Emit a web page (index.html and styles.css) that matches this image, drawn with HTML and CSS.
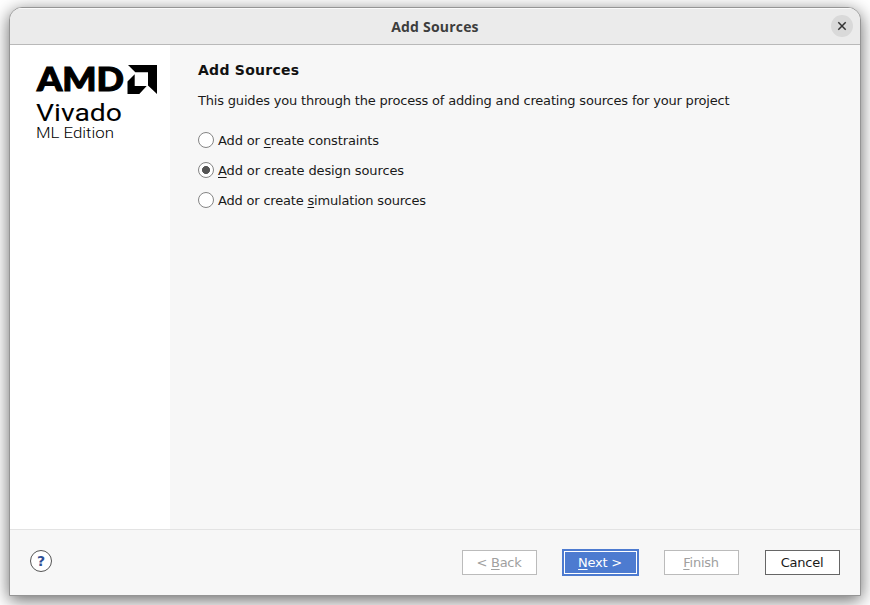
FILE: index.html
```html
<!DOCTYPE html>
<html lang="en">
<head>
<meta charset="utf-8">
<title>Add Sources</title>
<link rel="stylesheet" href="styles.css">
</head>
<body>
<div class="window">
  <header class="titlebar">
    <span class="title">Add Sources</span>
    <button class="close" aria-label="Close"><svg width="22" height="22" viewBox="0 0 22 22"><path d="M7.3 7.3l7.4 7.4M14.7 7.3l-7.4 7.4"/></svg></button>
  </header>
  <div class="body">
    <aside class="sidebar">
      <svg class="logo" width="124" height="80" viewBox="0 0 124 80">
        <text class="amd" x="1" y="31.3" textLength="87" lengthAdjust="spacingAndGlyphs">AMD</text>
        <path d="M92 5H121V34L112 25.5V12.3H99.3ZM98.7 14.3V26H110.7L103.3 34H91.5V21.5Z"/>
        <text class="product" x="0" y="61.2" textLength="86" lengthAdjust="spacingAndGlyphs">Vivado</text>
        <text class="edition" x="0" y="77.8" textLength="78" lengthAdjust="spacingAndGlyphs">ML Edition</text>
      </svg>
    </aside>
    <main class="content">
      <h1>Add Sources</h1>
      <p class="intro">This guides you through the process of adding and creating sources for your project</p>
      <div class="options">
        <label class="option"><i class="radio"></i><span class="o1">Add or <u>c</u>reate constraints</span></label>
        <label class="option"><i class="radio checked"></i><span class="o2"><u>A</u>dd or create design sources</span></label>
        <label class="option"><i class="radio"></i><span class="o3">Add or create <u>s</u>imulation sources</span></label>
      </div>
    </main>
  </div>
  <footer class="footer">
    <button class="help">?</button>
    <button class="btn disabled back"><span>&lt; <u>B</u>ack</span></button>
    <button class="btn primary"><span><u>N</u>ext &gt;</span></button>
    <button class="btn disabled finish"><span><u>F</u>inish</span></button>
    <button class="btn cancel"><span>Cancel</span></button>
  </footer>
</div>
</body>
</html>
```
FILE: styles.css
```css
* { box-sizing: border-box; }
body {
  margin: 0;
  height: 605px;
  overflow: hidden;
  background: #fff;
  padding: 7px 0 0 9px;
  font: 13px/16px "DejaVu Sans", sans-serif;
  color: #1a1a1a;
}
button { font: inherit; padding: 0; margin: 0; }
.window {
  width: 852px;
  height: 589px;
  border: 1px solid #959595;
  border-radius: 13px 13px 0 0;
  background: #f7f7f7;
  display: flex;
  flex-direction: column;
  overflow: hidden;
  box-shadow: 0 4px 17px rgba(0, 0, 0, .6);
}
.titlebar {
  height: 37px;
  flex: none;
  background: #ebebeb;
  border-top: 1px solid #fafafa;
  border-bottom: 1px solid #b9b9b9;
  display: grid;
  grid-template-columns: 1fr auto 1fr;
  align-items: center;
}
.title {
  grid-column: 2;
  font: bold 14px/20px "Open Sans", sans-serif;
  letter-spacing: .2px;
  color: #3d3d3d;
}
.close {
  justify-self: end;
  margin: -2px 7px 0 0;
  width: 22px;
  height: 22px;
  border: 0;
  border-radius: 50%;
  background: #d9d9d9;
}
.close svg { display: block; stroke: #333; stroke-width: 1.5; }
.body { height: 484px; flex: none; display: flex; }
.sidebar { width: 160px; background: #fff; padding: 15px 0 0 26px; }
.logo { display: block; fill: #000; overflow: visible; }
.amd { font-family: Lato, sans-serif; font-weight: 900; font-size: 33px; stroke: #000; stroke-width: 1.1px; }
.product { font-family: Roboto, sans-serif; font-weight: 400; font-size: 23.5px; }
.edition { font-family: Roboto, sans-serif; font-weight: 300; font-size: 14px; }
.content { flex: 1; padding: 17px 28px 0; }
h1 { margin: 0; font-size: 14px; line-height: 17px; letter-spacing: .27px; color: #111; }
.intro { margin: 14px 0 0; line-height: 16px; white-space: nowrap; letter-spacing: -.185px; }
.options { margin-top: 17px; }
.option { display: flex; align-items: center; height: 30px; gap: 4px; }
.o1 { letter-spacing: -.14px; }
.o2 { letter-spacing: -.12px; }
.o3 { letter-spacing: -.19px; }
.radio {
  width: 16px;
  height: 16px;
  margin-bottom: 2px;
  border: 1px solid #858585;
  border-radius: 50%;
  background: #fff;
}
.checked { background: radial-gradient(circle, #555 0 3.7px, #fff 4.3px); }
u { text-decoration: underline; text-underline-offset: 2px; text-decoration-thickness: 1px; text-decoration-skip-ink: none; }
.footer {
  flex: 1;
  border-top: 1px solid #e3e3e3;
  display: flex;
  align-items: center;
  padding: 0 20px 0;
}
.help {
  width: 22px;
  height: 22px;
  border: 1px solid #555;
  border-radius: 50%;
  background: #fff;
  color: #2f4f94;
  font: bold 14px/20px "DejaVu Sans", sans-serif;
  margin: 0 auto 3px 0;
}
.btn {
  width: 75px;
  height: 25px;
  border: 1px solid #666;
  background: #fff;
  color: #1a1a1a;
  padding-right: 1px;
  letter-spacing: -.25px;
}
.disabled { border-color: #bbb; color: #a0a0a0; }
.primary {
  width: 77px;
  height: 27px;
  margin: 0 25px;
  border: 2px solid #4d7bd0;
  box-shadow: inset 0 0 0 1px #fff;
  background: #4d7bd0;
  color: #fff;
}
.cancel { margin-left: 26px; }
```
